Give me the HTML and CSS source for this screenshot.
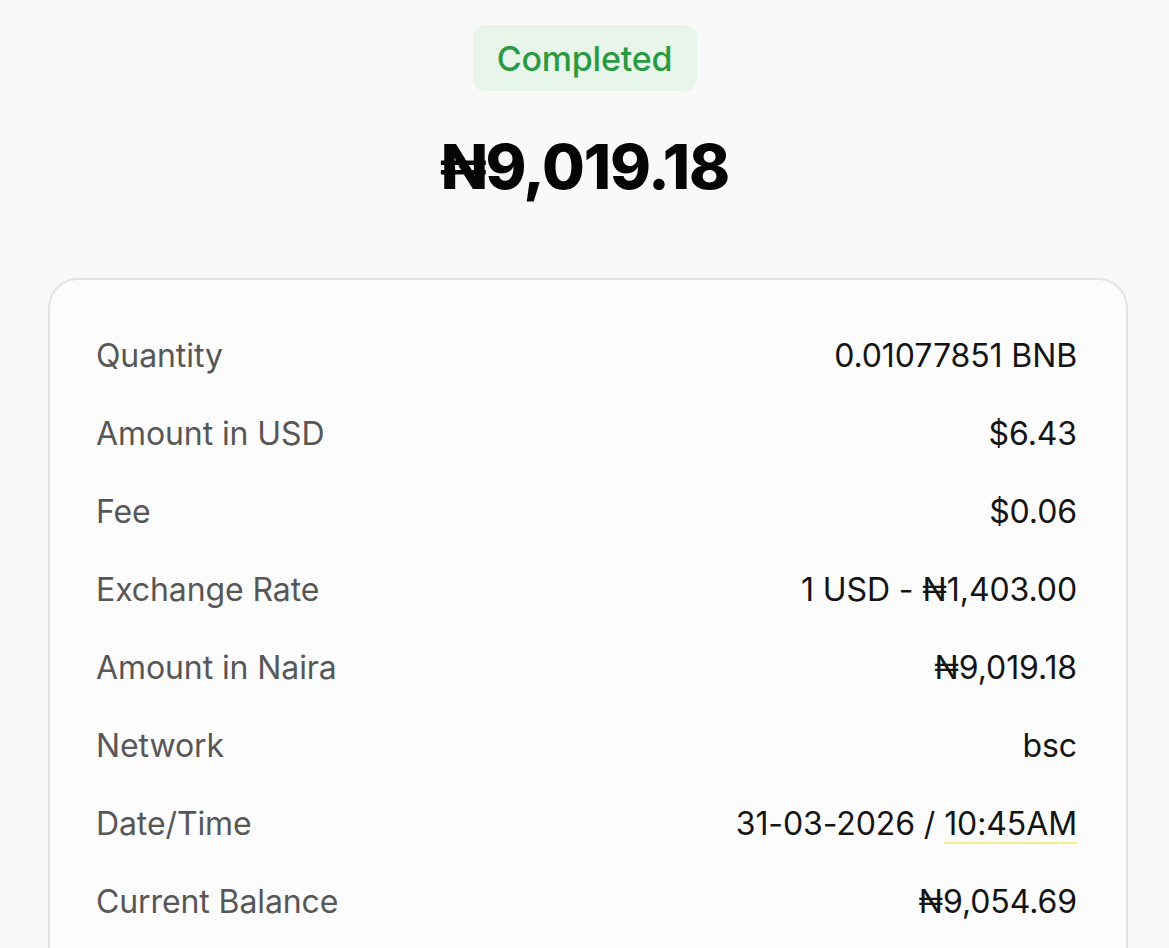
FILE: index.html
```html
<!DOCTYPE html>
<html lang="en">
<head>
<meta charset="utf-8">
<title>Transaction</title>
<link rel="stylesheet" href="styles.css">
</head>
<body>
<main class="page">
  <div class="status">Completed</div>
  <h1 class="amount">₦9,019.18</h1>
  <section class="card">
    <div class="row"><span class="label">Quantity</span><span class="value">0.01077851 BNB</span></div>
    <div class="row"><span class="label">Amount in USD</span><span class="value">$6.43</span></div>
    <div class="row"><span class="label">Fee</span><span class="value">$0.06</span></div>
    <div class="row"><span class="label">Exchange Rate</span><span class="value">1 USD - ₦1,403.00</span></div>
    <div class="row"><span class="label">Amount in Naira</span><span class="value">₦9,019.18</span></div>
    <div class="row"><span class="label">Network</span><span class="value">bsc</span></div>
    <div class="row"><span class="label">Date/Time</span><span class="value">31-03-2026 / <span class="time">10:45AM</span></span></div>
    <div class="row"><span class="label">Current Balance</span><span class="value">₦9,054.69</span></div>
  </section>
</main>
</body>
</html>
```

FILE: styles.css
```css
* { box-sizing: border-box; }
html, body { margin: 0; padding: 0; }
body {
  background: #f9f9f9;
  font-family: Inter, "Noto Sans", sans-serif;
  color: #111;
  height: 948px;
  overflow: hidden;
}
.page {
  display: flex;
  flex-direction: column;
  align-items: center;
  padding: 25px 0 0 0;
}
.status {
  width: 224px;
  height: 66px;
  border-radius: 12px;
  background: #e7f5eb;
  color: #2a9a42;
  font-size: 34px;
  font-weight: 500;
  letter-spacing: -0.2px;
  display: flex;
  align-items: center;
  justify-content: center;
}
.amount {
  margin: 38px 0 0;
  font-size: 62px;
  font-weight: 800;
  letter-spacing: -1.2px;
  line-height: 76px;
  height: 76px;
  color: #050505;
}
.card {
  align-self: flex-start;
  margin: 73px 0 0 48px;
  width: 1080px;
  border: 2px solid #e2e2e2;
  border-radius: 30px;
  background: #fcfcfc;
  padding: 36px 49px 40px 46px;
}
.row {
  height: 78px;
  display: flex;
  justify-content: space-between;
  align-items: center;
  font-size: 32px;
  letter-spacing: -0.1px;
}
.label { color: #575757; }
.value { color: #141414; }
.time {
  text-decoration: underline;
  text-decoration-color: #f3ef8a;
  text-decoration-thickness: 2px;
  text-underline-offset: 7px;
}
```
